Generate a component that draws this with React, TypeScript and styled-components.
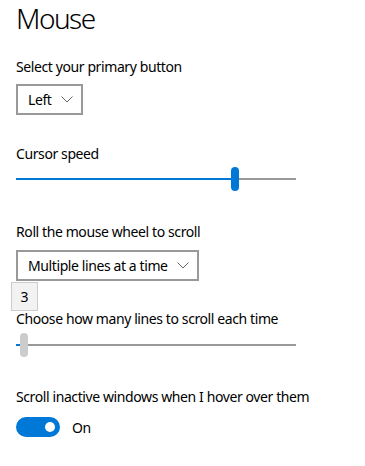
import React from 'react';
import styled, { createGlobalStyle } from 'styled-components';

const GlobalStyle = createGlobalStyle`
  html, body {
    margin: 0;
    padding: 0;
    background: #ffffff;
  }
  body {
    font-family: 'Noto Sans', 'Open Sans', Arial, sans-serif;
    color: #000000;
    -webkit-font-smoothing: antialiased;
  }
`;

const ACCENT = '#0078d7';

const Page = styled.div`
  width: 365px;
  height: 466px;
  padding: 0 16px;
  box-sizing: border-box;
  overflow: hidden;
`;

const Title = styled.h1`
  margin: 0;
  height: 40px;
  font-size: 28px;
  line-height: 36px;
  font-weight: 300;
  letter-spacing: -1.5px;
`;

const Group = styled.section<{ $top: number }>`
  position: relative;
  margin-top: ${({ $top }) => $top}px;
`;

const Label = styled.div<{ $gap?: number }>`
  font-size: 14px;
  line-height: 20px;
  height: 20px;
  letter-spacing: -0.4px;
  margin-bottom: ${({ $gap }) => $gap ?? 0}px;
  white-space: nowrap;
`;

const Dropdown = styled.div`
  display: inline-flex;
  align-items: center;
  gap: 9px;
  height: 31px;
  padding: 0 8px 0 10px;
  box-sizing: border-box;
  border: 2px solid #999999;
  font-size: 14px;
  letter-spacing: -0.4px;
  white-space: nowrap;
`;

const Chevron = () => (
  <svg width="12" height="7" viewBox="0 0 12 7" fill="none">
    <path d="M0.5 0.5 L6 6 L11.5 0.5" stroke="#666" strokeWidth="1" />
  </svg>
);

const SliderTrack = styled.div`
  position: relative;
  width: 280px;
  height: 24px;
  display: flex;
  align-items: center;
`;

const Rail = styled.div<{ $fill: number }>`
  width: 100%;
  height: 2px;
  background: linear-gradient(
    to right,
    ${ACCENT} 0,
    ${ACCENT} ${({ $fill }) => $fill}px,
    #999999 ${({ $fill }) => $fill}px
  );
`;

const Thumb = styled.div<{ $active: boolean }>`
  position: absolute;
  top: 0;
  width: 8px;
  height: 24px;
  border-radius: 4px;
  background: ${({ $active }) => ($active ? ACCENT : '#cccccc')};
`;

const ValueTip = styled.div`
  position: absolute;
  left: -5px;
  top: -27px;
  width: 27px;
  height: 29px;
  box-sizing: border-box;
  border: 1px solid #cccccc;
  background: #f2f2f2;
  font-size: 14px;
  line-height: 27px;
  text-align: center;
`;

const ToggleRow = styled.div`
  display: flex;
  align-items: center;
  gap: 12px;
  font-size: 14px;
  letter-spacing: -0.4px;
`;

const Switch = styled.div<{ $on: boolean }>`
  position: relative;
  width: 44px;
  height: 20px;
  border-radius: 10px;
  box-sizing: border-box;
  background: ${({ $on }) => ($on ? ACCENT : 'transparent')};
  border: ${({ $on }) => ($on ? 'none' : '2px solid #333')};
`;

const Knob = styled.div`
  position: absolute;
  top: 5px;
  right: 5px;
  width: 10px;
  height: 10px;
  border-radius: 50%;
  background: #ffffff;
`;

const Slider: React.FC<{ pos: number; active: boolean }> = ({ pos, active }) => (
  <SliderTrack>
    <Rail $fill={pos + 4} />
    <Thumb $active={active} style={{ left: pos }} />
  </SliderTrack>
);

const App: React.FC = () => (
  <>
    <GlobalStyle />
    <Page>
      <Title>Mouse</Title>

      <Group $top={17}>
        <Label $gap={7}>Select your primary button</Label>
        <Dropdown>
          <span>Left</span>
          <Chevron />
        </Dropdown>
      </Group>

      <Group $top={29}>
        <Label $gap={3}>Cursor speed</Label>
        <Slider pos={215} active />
      </Group>

      <Group $top={31}>
        <Label $gap={8}>Roll the mouse wheel to scroll</Label>
        <Dropdown>
          <span>Multiple lines at a time</span>
          <Chevron />
        </Dropdown>
      </Group>

      <Group $top={28}>
        <ValueTip>3</ValueTip>
        <Label $gap={4}>Choose how many lines to scroll each time</Label>
        <Slider pos={4} active={false} />
      </Group>

      <Group $top={30}>
        <Label $gap={10}>Scroll inactive windows when I hover over them</Label>
        <ToggleRow>
          <Switch $on>
            <Knob />
          </Switch>
          <span>On</span>
        </ToggleRow>
      </Group>
    </Page>
  </>
);

export default App;
